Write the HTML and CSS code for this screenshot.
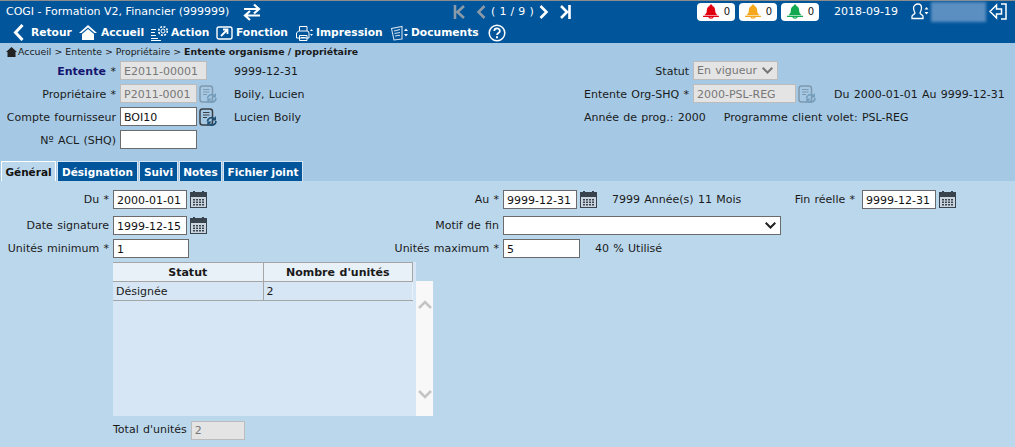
FILE: index.html
```html
<!DOCTYPE html>
<html lang="fr">
<head>
<meta charset="utf-8">
<title>COGI</title>
<link rel="stylesheet" href="styles.css">
</head>
<body>
<svg class="defs" width="0" height="0" aria-hidden="true">
  <defs>
    <symbol id="cal" viewBox="0 0 17 17">
      <rect x="0.5" y="1.500" width="16" height="15" fill="#c9d4de" stroke="#39434d"/>
      <rect x="0" y="1" width="17" height="5" fill="#39434d"/>
      <rect x="3" y="0" width="2" height="3" fill="#39434d"/>
      <rect x="12" y="0" width="2" height="3" fill="#39434d"/>
      <path d="M3 8h2v1.500H3zM6 8h2v1.500H6zM9 8h2v1.500H9zM12 8h2v1.500h-2zM3 10.500h2V12H3zM6 10.500h2V12H6zM9 10.500h2V12H9zM12 10.500h2V12h-2zM3 13h2v1.500H3zM6 13h2v1.500H6zM9 13h2v1.500H9zM12 13h2v1.500h-2z" fill="#39434d"/>
    </symbol>
    <symbol id="lookup" viewBox="0 0 18 18">
      <rect x="1" y="1" width="12.500" height="16" rx="2.500" fill="none" stroke="currentColor" stroke-width="1.500"/>
      <path d="M4 4.500h6.500M4 7h6.500M4 9.500h4" stroke="currentColor" fill="none"/>
      <path d="M8.500 13.500a4 4 0 0 1 6.500-3M17 13a4 4 0 0 1-6.500 3.200" stroke="#1f4f72" stroke-width="1.800" fill="none"/>
      <path d="M17 8v4.500h-4.500zM8.300 18v-4.500h4.500z" fill="#1f4f72"/>
    </symbol>
    <symbol id="bell" viewBox="0 0 18 16">
      <path d="M9 0.500c1 0 1.500 .7 1.500 1.500 2.500 .8 3 3 3 5.500 0 2 1 3 2.500 4.500H2c1.500-1.500 2.500-2.500 2.500-4.500 0-2.500 .5-4.700 3-5.500C7.500 1.200 8 .5 9 .5z" fill="currentColor"/>
      <path d="M0.500 13.200h17" stroke="currentColor" stroke-width="1.300"/>
      <path d="M6.500 13.500a2.600 2.200 0 0 0 5 0" fill="none" stroke="currentColor" stroke-width="1.300"/>
    </symbol>
  </defs>
</svg>

<header class="head">
  <div class="head-top">
    <span class="app-title">COGI - Formation V2, Financier (999999)</span>
    <svg class="swap" width="18" height="18" viewBox="0 0 18 18" fill="none" stroke="#fff" stroke-width="2.200"><path d="M1 6h14M11 1.500 16 6l-5 4.500M17 12.500H3M7 8l-5 4.500L7 17"/></svg>
    <nav class="pager">
      <svg class="pg-first" width="13" height="14" viewBox="0 0 13 14" fill="none" stroke="#8a9aa8" stroke-width="2.600"><path d="M2 0v14M11 1 4.500 7l6.500 6"/></svg>
      <svg class="pg-prev" width="10" height="14" viewBox="0 0 10 14" fill="none" stroke="#8a9aa8" stroke-width="2.600"><path d="M8.500 1 2.500 7l6 6"/></svg>
      <span class="pg-count">( 1 / 9 )</span>
      <svg class="pg-next" width="10" height="14" viewBox="0 0 10 14" fill="none" stroke="#fff" stroke-width="2.600"><path d="M1.500 1l6 6-6 6"/></svg>
      <svg class="pg-last" width="11" height="14" viewBox="0 0 11 14" fill="none" stroke="#fff" stroke-width="2.600"><path d="M1 1l6 6-6 6M9.500 0v14"/></svg>
    </nav>
    <div class="alerts">
      <span class="pill"><svg class="bell red" width="18" height="15"><use href="#bell"/></svg>0</span>
      <span class="pill"><svg class="bell amber" width="18" height="15"><use href="#bell"/></svg>0</span>
      <span class="pill"><svg class="bell green" width="18" height="15"><use href="#bell"/></svg>0</span>
    </div>
    <span class="today">2018-09-19</span>
    <svg class="user" width="18" height="17" viewBox="0 0 18 17" fill="none" stroke="#fff" stroke-width="1.300"><path d="M7 1c2.500 0 3.500 2 3.500 4S9.500 9 9 10c0 1 2 1.500 3 3v2.500H1V13c1-1.500 3-2 3-3-.5-1-1.500-3-1.500-5S4.500 1 7 1z"/><path d="M13.500 6.500 15.500 4l2 2.500zM13.500 9 15.500 11.500 17.500 9z" fill="#fff" stroke="none"/></svg>
    <span class="blurred"></span>
    <svg class="exit" width="18" height="17" viewBox="0 0 18 17" fill="none" stroke="#fff" stroke-width="1.500"><path d="M7.500 2 1 8.500 7.500 15v-4h5V6h-5zM12 1h5v15h-5"/></svg>
  </div>
  <div class="toolbar">
    <a class="tool t-retour"><svg width="11" height="17" viewBox="0 0 11 17" fill="none" stroke="#fff" stroke-width="3"><path d="M9.500 1 2.500 8.500l7 7.500"/></svg><b>Retour</b></a>
    <a class="tool t-accueil"><svg width="18" height="17" viewBox="0 0 18 17"><path d="M9 1 0 9h2.500L9 3.500 15.500 9H18z" fill="#fff"/><path d="M3 10l6-5 6 5v6H3z" fill="#fff"/></svg><b>Accueil</b></a>
    <a class="tool t-action"><svg width="18" height="16" viewBox="0 0 18 16" fill="none" stroke="#fff"><path d="M0 4.500h5M0 7.500h4M0 10.500h5M0 13.500h7M0 15.500h10"/><circle cx="12" cy="6" r="2"/><circle cx="12" cy="6" r="4.300" stroke-dasharray="2 1.370" stroke-width="1.600"/></svg><b>Action</b></a>
    <a class="tool t-fonction"><svg width="17" height="16" viewBox="0 0 17 16" fill="none" stroke="#fff" stroke-width="1.400"><rect x="1" y="2" width="15" height="12" rx="2"/><path d="M5 11l6-6M7 4.500h4.500V9" stroke-width="1.800"/></svg><b>Fonction</b></a>
    <a class="tool t-impression"><svg width="18" height="16" viewBox="0 0 18 16" fill="none" stroke="#fff"><path d="M4.500 6V1.500h7.500V6M1.500 13V8l2-2h9.500l1 2v5zM4.500 10.500h7.500v5H4.500z"/><path d="M6 12.500h4.500" /><path d="M15 6l1.500-2 1.500 2zM15 9l1.500 2 1.500-2z" fill="#fff" stroke="none"/></svg><b>Impression</b></a>
    <a class="tool t-documents"><svg width="18" height="16" viewBox="0 0 18 16" fill="none" stroke="#cfdfec"><path d="M0.500 3.500 3 15l8-1V1.500zM3 6l6-1.500M3.500 8.500 9 7.500M4 11l5-.8" stroke-width="1.100"/><path d="M13 6l2-2.500L17 6zM13 9l2 2.500L17 9z" fill="#fff" stroke="none"/></svg><b>Documents</b></a>
    <svg class="help" width="18" height="18" viewBox="0 0 18 18" fill="none" stroke="#fff" stroke-width="1.500"><circle cx="9" cy="9" r="7.800"/><path d="M6.300 7c0-3.400 5.600-3.400 5.600 0 0 2-2.900 2-2.900 4" stroke-width="1.700"/><path d="M8 12.300h2v2H8z" fill="#fff" stroke="none"/></svg>
  </div>
</header>

<div class="crumbs">
  <svg width="11" height="10" viewBox="0 0 11 10"><path d="M5.500 0 0 5h1.500v5h8V5H11z" fill="#222"/></svg>
  <span>Accueil &gt; Entente &gt; Propriétaire &gt; <b>Entente organisme / propriétaire</b></span>
</div>

<section class="top-form">
  <label class="lbl strong">Entente <i>*</i></label>
  <div class="cell"><input class="inp dis w87" value="E2011-00001" disabled></div>
  <span class="val">9999-12-31</span>
  <label class="lbl">Statut</label>
  <div class="cell"><span class="sel dis w85">En vigueur<svg width="11" height="7" viewBox="0 0 11 7" fill="none" stroke="#777" stroke-width="2"><path d="M.7 .7l4.800 4.800L10.300 .7"/></svg></span></div>
  <span class="val"></span>

  <label class="lbl">Propriétaire <i>*</i></label>
  <div class="cell"><input class="inp dis w77" value="P2011-0001" disabled><svg class="look off" width="18" height="18"><use href="#lookup"/></svg></div>
  <span class="val">Boily, Lucien</span>
  <label class="lbl">Entente Org-SHQ <i>*</i></label>
  <div class="cell"><input class="inp dis w103" value="2000-PSL-REG" disabled><svg class="look off" width="18" height="18"><use href="#lookup"/></svg></div>
  <span class="val">Du 2000-01-01 Au 9999-12-31</span>

  <label class="lbl">Compte fournisseur</label>
  <div class="cell"><input class="inp w77" value="BOI10"><svg class="look" width="18" height="18"><use href="#lookup"/></svg></div>
  <span class="val">Lucien Boily</span>
  <div class="prog"><span>Année de prog.: 2000</span><span>Programme client volet: PSL-REG</span></div>

  <label class="lbl">Nº ACL (SHQ)</label>
  <div class="cell"><input class="inp w77" value=""></div>
</section>

<nav class="tabs">
  <a class="tab active">Général</a>
  <a class="tab">Désignation</a>
  <a class="tab">Suivi</a>
  <a class="tab">Notes</a>
  <a class="tab">Fichier joint</a>
</nav>

<section class="panel">
  <div class="tab-form">
    <label class="lbl">Du <i>*</i></label>
    <div class="cell"><input class="inp w74" value="2000-01-01"><svg class="cal" width="17" height="17"><use href="#cal"/></svg></div>
    <label class="lbl">Au <i>*</i></label>
    <div class="cell"><input class="inp w74" value="9999-12-31"><svg class="cal" width="17" height="17"><use href="#cal"/></svg><span class="after">7999 Année(s) 11 Mois</span></div>
    <label class="lbl end">Fin réelle <i>*</i></label>
    <div class="cell"><input class="inp w74" value="9999-12-31"><svg class="cal" width="17" height="17"><use href="#cal"/></svg></div>

    <label class="lbl">Date signature</label>
    <div class="cell"><input class="inp w74" value="1999-12-15"><svg class="cal" width="17" height="17"><use href="#cal"/></svg></div>
    <label class="lbl">Motif de fin</label>
    <div class="cell wide"><span class="sel w278"><svg width="11" height="7" viewBox="0 0 11 7" fill="none" stroke="#222" stroke-width="2"><path d="M.7 .7l4.800 4.800L10.300 .7"/></svg></span></div>

    <label class="lbl">Unités minimum <i>*</i></label>
    <div class="cell"><input class="inp w76" value="1"></div>
    <label class="lbl">Unités maximum <i>*</i></label>
    <div class="cell wide"><input class="inp w77" value="5"><span class="after">40 % Utilisé</span></div>
  </div>

  <div class="grid-wrap">
    <div class="grid-main">
      <table class="grid">
        <thead><tr><th>Statut</th><th>Nombre d'unités</th></tr></thead>
        <tbody><tr><td>Désignée</td><td>2</td></tr></tbody>
      </table>
    </div>
    <div class="scroll">
      <svg width="14" height="9" viewBox="0 0 14 9" fill="none" stroke="#c4c4c4" stroke-width="2.500"><path d="M1 8l6-6 6 6"/></svg>
      <svg width="14" height="9" viewBox="0 0 14 9" fill="none" stroke="#c4c4c4" stroke-width="2.500"><path d="M1 1l6 6 6-6"/></svg>
    </div>
  </div>

  <div class="total">
    <label>Total d'unités</label>
    <input class="inp dis w54" value="2" disabled>
  </div>
</section>
</body>
</html>
```

FILE: styles.css
```css
* { box-sizing: border-box; }
html, body { margin: 0; padding: 0; }
body {
  width: 1015px;
  height: 447px;
  overflow: hidden;
  background: #bbd7ec;
  font-family: "DejaVu Sans", Verdana, sans-serif;
  font-size: 11px;
  word-spacing: 0.8px;
  color: #1a1a1a;
}
.defs { position: absolute; }
svg { display: block; flex: none; }

/* header */
.head {
  height: 43px;
  background: #00559b;
  border-top: 1px solid #8c8c8c;
  color: #fff;
}
.head-top { height: 21px; display: flex; align-items: center; padding-left: 6px; }
.app-title { width: 237px; white-space: nowrap; font-size: 11px; word-spacing: 0; }
.swap { margin-right: 192px; }
.pager { display: flex; align-items: center; width: 118px; }
.pg-first { margin-right: 10px; }
.pg-prev { margin-right: 5px; }
.pg-count { width: 49px; font-size: 11px; letter-spacing: 0.3px; word-spacing: 0; white-space: nowrap; }
.pg-next { margin-right: 11px; }
.alerts { display: flex; gap: 4px; margin-left: 126px; }
.pill {
  width: 38px; height: 18px;
  background: #fff; border-radius: 4px;
  color: #111; font-size: 10px;
  display: flex; align-items: center; justify-content: flex-end;
  gap: 4px; padding-right: 5px;
}
.bell.red { color: #e2000f; }
.bell.amber { color: #f6a71c; }
.bell.green { color: #12a84f; }
.today { margin-left: 15px; width: 77px; white-space: nowrap; }
.user { width: 18px; }
.blurred { width: 55px; height: 20px; margin-left: 2px; background: #5b8fc1; filter: blur(1.5px); }
.exit { margin-left: 3px; }

.toolbar { height: 21px; display: flex; align-items: center; padding-left: 13px; }
.tool { display: flex; align-items: center; font-weight: bold; color: #fff; white-space: nowrap; }
.tool b { font-size: 10.700px; }
.t-retour { width: 66px; gap: 7px; }
.t-accueil { width: 72px; gap: 4px; }
.t-action { width: 65px; gap: 2px; }
.t-fonction { width: 79px; gap: 3px; }
.t-impression { width: 96px; gap: 3px; }
.t-documents { width: 97px; gap: 2px; }

.crumbs {
  height: 17px;
  background: #a5c9e5;
  display: flex; align-items: center; gap: 1px;
  padding-left: 6px;
  font-size: 9.400px;
  word-spacing: 0;
  white-space: nowrap;
}

/* forms */
.lbl { text-align: right; white-space: nowrap; line-height: 20px; }
.lbl i { font-style: normal; }
.lbl.strong { font-weight: bold; color: #14146e; }
.lbl.strong i { font-weight: normal; color: #1a1a1a; }
.cell { display: flex; align-items: center; white-space: nowrap; }
.val { white-space: nowrap; line-height: 21px; }

.top-form {
  height: 101px;
  background: #a5c9e5;
  padding-top: 1px;
  display: grid;
  grid-template-columns: 116px 118px 100px 355px 145px 1fr;
  grid-auto-rows: 23px;
  align-items: start;
}
.top-form .lbl { line-height: 22px; }
.top-form .cell { padding-left: 4px; }
.prog { grid-column: 4 / 7; display: flex; gap: 18px; padding-left: 250px; white-space: nowrap; line-height: 21px; }

.inp {
  display: block;
  height: 19px;
  padding: 1px 3px 0;
  border: 1px solid #6b6b6b;
  background: #fff;
  color: #111;
  font-family: inherit;
  font-size: 11px;
  border-radius: 0;
  outline: none;
}
.inp.dis { background: #e4e4e4; border-color: #bcbcbc; color: #777; opacity: 1; -webkit-text-fill-color: #777; }
.w54 { width: 54px; }
.w74 { width: 74px; }
.w76 { width: 76px; }
.w77 { width: 77px; }
.w87 { width: 87px; }
.w103 { width: 103px; }
.w85 { width: 85px; }
.w278 { width: 278px; }
.sel {
  display: flex; align-items: center; justify-content: space-between;
  height: 19px; padding: 0 4px 0 3px;
  border: 1px solid #6b6b6b; background: #fff;
}
.sel.w278 { justify-content: flex-end; }
.sel.dis { background: #e4e4e4; border-color: #bcbcbc; color: #777; }
.look { margin-left: 2px; color: #3a3f44; }
.look.off { opacity: .35; }

/* tabs */
.tabs { height: 20px; background: #a5c9e5; display: flex; padding-left: 1px; }
.tab {
  display: flex; align-items: center; justify-content: center;
  height: 20px;
  background: #00559b; color: #fff; font-weight: bold; font-size: 10.500px;
  word-spacing: 0;
  border: 1px solid #d5e4f0; border-bottom: 0;
  white-space: nowrap;
}
.tab:nth-child(1) { width: 55px; margin-right: 1px; }
.tab:nth-child(2) { width: 81px; margin-right: 1px; }
.tab:nth-child(3) { width: 39px; margin-right: 1px; }
.tab:nth-child(4) { width: 43px; margin-right: 1px; }
.tab:nth-child(5) { width: 80px; }
.tab.active { background: #bbd7ec; color: #111; border-color: #fff; }

.panel { padding-top: 9px; }
.tab-form {
  display: grid;
  grid-template-columns: 109px 281px 109px 259px 100px 1fr;
  grid-template-rows: 26px 23px 23px;
  align-items: start;
}
.tab-form .cell { padding-left: 4px; }
.tab-form .lbl.end { padding-right: 3px; }
.tab-form .cell.wide { grid-column: 4 / 7; }
.cal { margin-left: 3px; }
.after { margin-left: 15px; }

.grid-wrap { display: flex; align-items: flex-end; margin: 0 0 0 113px; width: 320px; height: 154px; }
.grid-main { width: 303px; height: 154px; background: #d6e6f4; }
.grid { width: 300px; border-collapse: collapse; table-layout: fixed; font-size: 11px; }
.grid th { height: 19px; background: #e8f0f8; border: solid #a5a5a5; border-width: 1px 1px 1px 0; font-weight: bold; padding: 0; }
.grid th:first-child { width: 150px; }
.grid td { height: 19px; border: solid #a5a5a5; border-width: 0 1px 1px 0; padding: 0 3px; }
.grid td:last-child { border-right-color: #e8f0f8; }
.scroll { width: 17px; height: 135px; background: #f8f8f8; display: flex; flex-direction: column; justify-content: space-between; align-items: center; padding: 19px 0 17px; }

.total { display: flex; align-items: center; gap: 4px; margin: 4px 0 0 113px; }
.total label { line-height: 20px; }
```
